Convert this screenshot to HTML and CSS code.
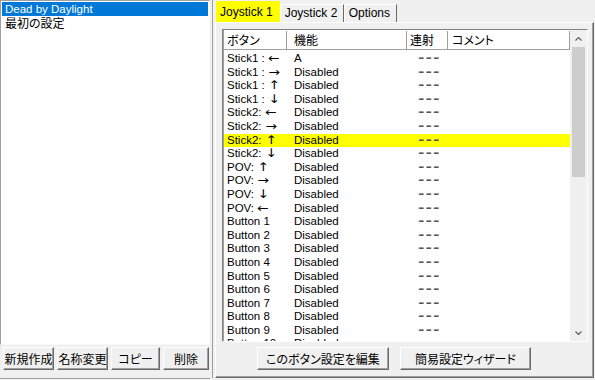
FILE: index.html
```html
<!DOCTYPE html>
<html lang="ja">
<head>
    <meta charset="UTF-8">
    <title>Joystick</title>
    <link rel="stylesheet" href="styles.css">
</head>
<body>

<div id="app">
    <div id="left">
        <div class="listbox">
            <div class="item selected">Dead by Daylight</div>
            <div class="item jp">最初の設定</div>
        </div>
        <div class="btnrow">
            <button class="btn b-new jp">新規作成</button>
            <button class="btn b-ren jp">名称変更</button>
            <button class="btn b-copy jp">コピー</button>
            <button class="btn b-del jp">削除</button>
        </div>
    </div>

    <div class="splitter"></div>

    <div id="right">
        <div class="tabs">
            <div class="tab active">Joystick 1</div>
            <div class="tab">Joystick 2</div>
            <div class="tab">Options</div>
        </div>
        <div class="panel">
            <div class="listview">
                <div class="lv-main">
                    <div class="hdr">
                        <div class="hc c1 jp">ボタン</div>
                        <div class="hc c2 jp">機能</div>
                        <div class="hc c3 jp">連射</div>
                        <div class="hc c4 jp">コメント</div>
                    </div>
                    <div class="rows" id="rows"></div>
                </div>
                <div class="vscroll">
                    <div class="arrow up"><svg width="7" height="4" viewBox="0 0 7 4"><path d="M0.5 3.5 L3.5 0.5 L6.5 3.5" fill="none" stroke="#606060" stroke-width="1.2"/></svg></div>
                    <div class="track"><div class="thumb"></div></div>
                    <div class="arrow down"><svg width="7" height="4" viewBox="0 0 7 4"><path d="M0.5 0.5 L3.5 3.5 L6.5 0.5" fill="none" stroke="#606060" stroke-width="1.2"/></svg></div>
                </div>
            </div>
            <div class="actions">
                <button class="btn b-edit jp">このボタン設定を編集</button>
                <button class="btn b-wiz jp">簡易設定ウィザード</button>
            </div>
        </div>
    </div>
</div>

<script>
    // [label, arrow]
    const buttons = [
        ['Stick1 : ', '←'], ['Stick1 : ', '→'], ['Stick1 : ', '↑'], ['Stick1 : ', '↓'],
        ['Stick2: ', '←'], ['Stick2: ', '→'], ['Stick2: ', '↑'], ['Stick2: ', '↓'],
        ['POV: ', '↑'], ['POV: ', '→'], ['POV: ', '↓'], ['POV: ', '←']
    ];
    for (let i = 1; i <= 10; i++) {
        buttons.push(['Button ' + i, '']);
    }

    const rowsElement = document.getElementById('rows');

    buttons.forEach(function (name, index) {
        const row = document.createElement('div');
        row.className = 'row' + (index === 6 ? ' hilite' : '');
        const arrow = name[1] ? '<span class="arr">' + name[1] + '</span>' : '';
        row.innerHTML =
            '<span class="c1">' + name[0] + arrow + '</span>' +
            '<span class="c2">' + (index === 0 ? 'A' : 'Disabled') + '</span>' +
            '<span class="c3"><span class="dash">---</span></span>' +
            '<span class="c4"></span>';
        rowsElement.appendChild(row);
    });
</script>

</body>
</html>
```

FILE: styles.css
```css
body {
    margin: 0;
    width: 595px;
    height: 380px;
    overflow: hidden;
    background-color: #f0f0f0;
    font-family: 'Liberation Sans', 'Noto Sans CJK JP', sans-serif;
    font-size: 11px;
    color: #000;
}

.jp {
    font-family: 'Noto Sans CJK JP', sans-serif;
    font-size: 12px;
    font-feature-settings: "palt";
}

#app {
    display: flex;
    height: 380px;
}

/* left side: profile list */
#left {
    width: 210px;
    display: flex;
    flex-direction: column;
    height: 378px;
    border-bottom: 1px solid #a0a0a0;
}

.listbox {
    height: 341px;
    background-color: #fff;
    border: 1px solid;
    border-color: #a0a0a0 #f8f8f8 #f8f8f8 #a0a0a0;
    padding: 1px;
}

.item {
    height: 14px;
    line-height: 14px;
    padding-left: 3px;
    font-size: 11.5px;
}

.item.jp {
    font-size: 12px;
    line-height: 14px;
}

.item.selected {
    background-color: #0078d7;
    color: #fff;
}

.btnrow {
    display: flex;
    gap: 3px;
    padding: 2px 0 0 3px;
}

.btn {
    height: 23px;
    padding: 0;
    background-color: #f0f0f0;
    border: 1px solid;
    border-color: #fff #696969 #696969 #fff;
    box-shadow: inset -1px -1px 0 #a0a0a0;
    color: #000;
    line-height: 18px;
}

.b-new { width: 51px; }
.b-ren { width: 51px; }
.b-copy { width: 49px; }
.b-del { width: 46px; }

.splitter {
    width: 5px;
    box-sizing: border-box;
    border-left: 2px solid #f0f0f0;
    border-right: 2px solid #f0f0f0;
    background-color: #a0a0a0;
    height: 378px;
}

/* right side: tabs */
#right {
    flex: 1;
    display: flex;
    flex-direction: column;
    padding-top: 2px;
    padding-right: 1px;
}

.tabs {
    display: flex;
    height: 20px;
    padding-left: 1px;
    align-items: flex-end;
}

.tab {
    font-size: 12px;
    height: 17px;
    line-height: 17px;
    padding: 0 3px 0 4px;
    border: 1px solid;
    border-bottom: none;
    border-color: #fff #696969 #fff #fff;
}

.tab.active {
    height: 20px;
    line-height: 20px;
    background-color: #ffff00;
    border-color: #ffff00;
    padding: 0 6px 0 3px;
}

.tab:nth-child(2) { width: 55px; }
.tab:nth-child(3) { width: 44px; }

.panel {
    flex: 1;
    display: flex;
    flex-direction: column;
    border: 1px solid;
    border-color: #fff #696969 #696969 #fff;
    box-shadow: inset -1px -1px 0 #a0a0a0;
    margin-bottom: 2px;
    padding: 6px 5px 0 6px;
}

/* list view */
.listview {
    display: flex;
    height: 311px;
    background-color: #fff;
    border: 1px solid;
    border-color: #828282 #fff #fff #828282;
    box-shadow: inset 1px 1px 0 #a0a0a0;
}

.lv-main {
    flex: 1;
    overflow: hidden;
    padding-left: 1px;
}

.hdr {
    display: flex;
    height: 18px;
    border-top: 1px solid #fff;
    border-bottom: 1px solid #a0a0a0;
}

.hc {
    height: 18px;
    line-height: 18px;
    box-sizing: border-box;
    border-right: 1px solid #a0a0a0;
    padding-left: 4px;
}

.c1 { width: 63px; padding-left: 3px; box-sizing: border-box; }
.c2 { width: 120px; padding-left: 7px; box-sizing: border-box; }
.c3 { width: 41px; box-sizing: border-box; }
.c4 { flex: 1; }

.hc.c3 { padding-left: 3px; }
.hc.c4 { padding-left: 4px; border-right: 1px solid #a0a0a0; }

.rows {
    padding-top: 2px;
}

.row {
    display: flex;
    height: 13.6px;
    line-height: 13.6px;
    white-space: nowrap;
    font-size: 11.5px;
}

.arr {
    font-family: 'DejaVu Sans', sans-serif;
    font-size: 12px;
    display: inline-block;
    transform: scaleX(1.15);
    margin-left: 1px;
}

.row .c3 {
    text-align: center;
    padding-left: 4px;
}

.dash {
    display: inline-block;
    color: #555;
    font-size: 12px;
    font-weight: bold;
    letter-spacing: 1px;
    transform: scaleX(1.5);
}

.row.hilite {
    background-color: #ffff00;
}

/* scrollbar */
.vscroll {
    width: 17px;
    display: flex;
    flex-direction: column;
    background-color: #f0f0f0;
}

.arrow {
    height: 17px;
    display: flex;
    align-items: center;
    justify-content: center;
}

.track {
    flex: 1;
    padding: 0 2px;
}

.thumb {
    height: 130px;
    background-color: #cdcdcd;
}

.actions {
    display: flex;
    gap: 11px;
    padding: 5px 0 0 35px;
}

.b-edit { width: 132px; }
.b-wiz { width: 131px; }
```
